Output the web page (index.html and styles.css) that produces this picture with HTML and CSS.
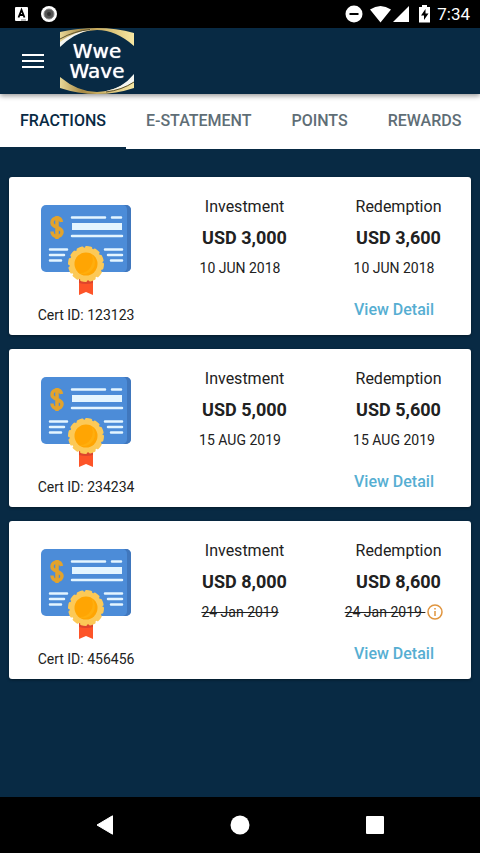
FILE: index.html
```html
<!DOCTYPE html>
<html lang="en">
<head>
    <meta charset="UTF-8">
    <meta name="viewport" content="width=device-width, initial-scale=1.0">
    <title>Wwe Wave - Fractions</title>
    <link rel="stylesheet" href="styles.css">
</head>
<body>
    <!-- shared drawings -->
    <svg class="sprite" aria-hidden="true">
        <symbol id="certificate" viewBox="0 0 90 90">
            <rect width="90" height="67" rx="5" fill="#4c8cd8"/>
            <path d="M85 0a5 5 0 0 1 5 5v57a5 5 0 0 1-5 5h-3a5 5 0 0 0 4-5V5a5 5 0 0 0-4-5z" fill="#4077bd"/>
            <path d="M20.500 17c-.5-2.500-2-4-4.500-4-3 0-5 2-5 4.500 0 6 10 4 10 9.500 0 2.500-2 4.500-5 4.500-3 0-5-2-5-5M16 11v23" fill="none" stroke="#e3a32c" stroke-width="3.500"/>
            <g stroke="#e4f5ff" stroke-width="2.500" stroke-linecap="round">
                <path d="M31 12.500h33M71 12.500h9M31 31h50M9 44.500h17M9 50h14M9 55.500h11M64 44.500h17M67 50h14M70 55.500h11"/>
            </g>
            <rect x="31" y="18" width="50" height="7" fill="#e4f5ff"/>
            <path d="M38 73h14v17l-7-3-7 3z" fill="#fd5428"/>
            <path d="M38 73h14v5q-7 2-14 0z" fill="#dd452c"/>
            <circle cx="45" cy="59" r="16.500" fill="#fcc957"/>
            <circle cx="45" cy="59" r="16.500" fill="none" stroke="#fcc957" stroke-width="3" stroke-dasharray="4.320 4.320" stroke-linecap="round"/>
            <circle cx="45" cy="59" r="11.500" fill="#ffa503"/>
            <path d="M50 48.700a11.500 11.500 0 0 1-12 19.300 13 13 0 0 0 12-19.300z" fill="#ffae0d"/>
        </symbol>
    </svg>

    <div class="status-bar">
        <svg width="14" height="14" viewBox="0 0 14 14" aria-hidden="true">
            <rect x="1" width="13" height="14" rx="1" fill="#fff"/>
            <path d="M4.500 10.500 7.500 3l3 7.500M5.500 8h4" fill="none" stroke="#000" stroke-width="1.800"/>
            <path d="M7 13h5" stroke="#777"/>
        </svg>
        <svg width="16" height="16" viewBox="0 0 16 16" aria-hidden="true">
            <circle cx="8" cy="8" r="8" fill="#fff"/>
            <circle cx="8" cy="8" r="5" fill="#555" stroke="#888"/>
            <circle cx="8" cy="8" r="2" fill="#333"/>
        </svg>
        <div class="status-right">
            <svg width="108" height="20" viewBox="0 0 108 20" aria-hidden="true">
                <g fill="#fff">
                    <circle cx="27" cy="10" r="8.500"/>
                    <path d="M43 5.500Q53.500-1.500 64 5.500L53.500 18.500zM82 2v16H66z"/>
                    <path d="M95 1h5v2h3v15.500H92V3h3z"/>
                </g>
                <path d="M22.500 9h9v2h-9zM98.500 5 94 11.500h3V16l4.500-6.500h-3z" fill="#000"/>
            </svg>
            <span class="clock">7:34</span>
        </div>
    </div>

    <header class="app-bar">
        <button class="menu-btn" type="button" aria-label="Menu">
            <svg width="22" height="16" viewBox="0 0 22 16">
                <path d="M0 2h22M0 8h22M0 14h22" stroke="#fff" stroke-width="2.200"/>
            </svg>
        </button>
        <a class="logo" href="#">
            <svg class="logo-frame" viewBox="0 0 74 66" aria-hidden="true">
                <defs>
                    <linearGradient id="gold">
                        <stop offset="0" stop-color="#e9d898"/>
                        <stop offset=".3" stop-color="#a88a45"/>
                        <stop offset=".55" stop-color="#cfb366"/>
                        <stop offset="1" stop-color="#f7e8a4"/>
                    </linearGradient>
                </defs>
                <path d="M0 4Q18 0 37 0T74 5v13Q56 2 37 2T0 16z" fill="url(#gold)"/>
                <path d="M0 14Q14 3 32 1.500 14 5 0 19z" fill="#f5f6f2"/>
                <path d="M0 11Q14 3 30 1.500" fill="none" stroke="#5c512e"/>
                <path d="M0 49Q18 64 37 64T74 49v11Q56 66 37 66T0 60z" fill="url(#gold)"/>
                <path d="M74 46Q62 61 44 63.500q18-1.500 30-10z" fill="#f5f6f2"/>
                <path d="M74 54q-12 8-28 10" fill="none" stroke="#5c512e"/>
            </svg>
            <span>Wwe</span>
            <span>Wave</span>
        </a>
    </header>

    <nav class="tabs">
        <a class="tab active" href="#">FRACTIONS</a>
        <a class="tab" href="#">E-STATEMENT</a>
        <a class="tab" href="#">POINTS</a>
        <a class="tab" href="#">REWARDS</a>
    </nav>

    <main class="cards">
        <section class="card">
            <div class="col">
                <svg class="cert-icon" aria-hidden="true"><use href="#certificate"/></svg>
                <div class="cert-id">Cert ID: 123123</div>
            </div>
            <div class="col">
                <div class="label">Investment</div>
                <div class="amount">USD 3,000</div>
                <div class="date">10 JUN 2018</div>
            </div>
            <div class="col">
                <div class="label">Redemption</div>
                <div class="amount">USD 3,600</div>
                <div class="date">10 JUN 2018</div>
                <a class="detail-link" href="#">View Detail</a>
            </div>
        </section>

        <section class="card">
            <div class="col">
                <svg class="cert-icon" aria-hidden="true"><use href="#certificate"/></svg>
                <div class="cert-id">Cert ID: 234234</div>
            </div>
            <div class="col">
                <div class="label">Investment</div>
                <div class="amount">USD 5,000</div>
                <div class="date">15 AUG 2019</div>
            </div>
            <div class="col">
                <div class="label">Redemption</div>
                <div class="amount">USD 5,600</div>
                <div class="date">15 AUG 2019</div>
                <a class="detail-link" href="#">View Detail</a>
            </div>
        </section>

        <section class="card">
            <div class="col">
                <svg class="cert-icon" aria-hidden="true"><use href="#certificate"/></svg>
                <div class="cert-id">Cert ID: 456456</div>
            </div>
            <div class="col">
                <div class="label">Investment</div>
                <div class="amount">USD 8,000</div>
                <div class="date"><s>24 Jan 2019</s></div>
            </div>
            <div class="col">
                <div class="label">Redemption</div>
                <div class="amount">USD 8,600</div>
                <div class="date">
                    <s>24 Jan 2019&nbsp;</s>
                    <button class="info-btn" type="button" aria-label="Info">
                        <svg width="16" height="16" viewBox="0 0 16 16">
                            <circle cx="8" cy="8" r="7" fill="none" stroke="#e0953f" stroke-width="1.500"/>
                            <path d="M8 7v5M8 4v1.600" stroke="#e0953f" stroke-width="1.500"/>
                        </svg>
                    </button>
                </div>
                <a class="detail-link" href="#">View Detail</a>
            </div>
        </section>
    </main>

    <div class="nav-bar">
        <button type="button" aria-label="Back">
            <svg width="20" height="20" viewBox="0 0 20 20"><path d="M2 10 17.500.800v18.400z" fill="#fff" stroke="#fff" stroke-linejoin="round"/></svg>
        </button>
        <button type="button" aria-label="Home">
            <svg width="20" height="20" viewBox="0 0 20 20"><circle cx="10" cy="10" r="9.500" fill="#fff"/></svg>
        </button>
        <button type="button" aria-label="Recent apps">
            <svg width="20" height="20" viewBox="0 0 20 20"><rect x="1" y="1" width="18" height="18" rx="1" fill="#fff"/></svg>
        </button>
    </div>
</body>
</html>
```

FILE: styles.css
```css
* {
    box-sizing: border-box;
}
body {
    font-family: Roboto, sans-serif;
    background: #082a44;
    color: #212121;
    margin: 0;
    min-height: 100vh;
    display: flex;
    flex-direction: column;
}
button {
    background: none;
    border: none;
    padding: 0;
    cursor: pointer;
}
a {
    text-decoration: none;
}
svg {
    display: block;
}
.sprite {
    position: absolute;
    width: 0;
    height: 0;
}

/* Status bar */
.status-bar {
    display: flex;
    align-items: center;
    gap: 13px;
    height: 28px;
    padding: 0 10px 0 14px;
    background: #000;
    color: #fff;
}
.status-right {
    display: flex;
    align-items: center;
    gap: 2px;
    margin-left: auto;
}
.clock {
    font-size: 17px;
    line-height: 20px;
}

/* App bar */
.app-bar {
    display: flex;
    align-items: center;
    gap: 16px;
    height: 66px;
    padding-left: 22px;
    box-shadow: 0 2px 5px rgba(0,0,0,0.4);
    z-index: 1;
}
.logo {
    position: relative;
    display: flex;
    flex-direction: column;
    align-items: center;
    justify-content: center;
    width: 74px;
    height: 66px;
    color: #fff;
    font-family: "DejaVu Sans", sans-serif;
    font-size: 20px;
    line-height: 20px;
    text-shadow: 0 0 1px #fff;
}
.logo-frame {
    position: absolute;
    inset: 0;
}

/* Tabs */
.tabs {
    display: flex;
    overflow: hidden;
    background: #fff;
}
.tab {
    flex: none;
    padding: 0 20px;
    border-bottom: 2px solid transparent;
    color: #5f6e76;
    font-size: 16px;
    font-weight: 500;
    line-height: 53px;
}
.tab.active {
    color: #082a44;
    border-bottom-color: #082a44;
}

/* Cards */
.cards {
    flex: 1;
    display: flex;
    flex-direction: column;
    gap: 14px;
    padding: 28px 9px;
}
.card {
    display: grid;
    grid-template-columns: repeat(3, 1fr);
    padding: 15px 0 10px;
    background: #fff;
    border-radius: 3px;
    box-shadow: 0 1px 3px rgba(0,0,0,0.4);
}
.col {
    display: flex;
    flex-direction: column;
    align-items: center;
}
.cert-icon {
    width: 90px;
    height: 90px;
    margin: 13px 0 10px;
}
.cert-id {
    font-size: 14px;
    line-height: 20px;
}
.label {
    padding-left: 9px;
    font-size: 16px;
    line-height: 30px;
}
.amount {
    padding-left: 9px;
    font-size: 18px;
    font-weight: 700;
    line-height: 32px;
}
.date {
    display: flex;
    align-items: center;
    gap: 2px;
    font-size: 14px;
    line-height: 28px;
}
.detail-link {
    margin-top: 14px;
    color: #56aed2;
    font-size: 16px;
    font-weight: 500;
    line-height: 28px;
}

/* Navigation bar */
.nav-bar {
    display: flex;
    justify-content: center;
    height: 56px;
    background: #000;
}
.nav-bar button {
    display: flex;
    align-items: center;
    justify-content: center;
    width: 135px;
}
```
